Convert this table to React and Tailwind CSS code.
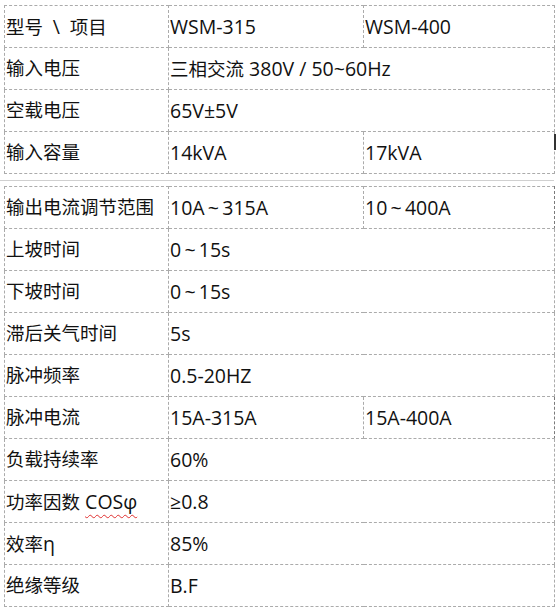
const font = { fontFamily: '"Open Sans", "Noto Sans CJK SC", sans-serif' };

const upper = [
  ["型号\u2002\\\u2002项目", "WSM-315", "WSM-400"],
  ["输入电压", "三相交流 380V / 50~60Hz"],
  ["空载电压", "65V±5V"],
  ["输入容量", "14kVA", "17kVA"],
];

const lower = [
  ["输出电流调节范围", "10A\u2009~\u2009315A", "10\u2009~\u2009400A"],
  ["上坡时间", "0\u2009~\u200915s"],
  ["下坡时间", "0\u2009~\u200915s"],
  ["滞后关气时间", "5s"],
  ["脉冲频率", "0.5-20HZ"],
  ["脉冲电流", "15A-315A", "15A-400A"],
  ["负载持续率", "60%"],
  ["功率因数 COSφ", "≥0.8"],
  ["效率η", "85%"],
  ["绝缘等级", "B.F"],
];

const cell = "border border-dashed border-[#ababab] px-[1px] align-middle whitespace-nowrap";

// latin runs are set a touch larger than the CJK glyphs, like the original
function Mixed({ text }) {
  const parts = text.split(/([\u0020-\u04ff\u2000-\u22ff]+)/).filter(Boolean);
  return parts.map((p, i) =>
    /[\u4e00-\u9fff]/.test(p) ? (
      <span key={i}>{p}</span>
    ) : (
      <span key={i} className="text-[19.5px]">
        {p}
      </span>
    )
  );
}

function Label({ text }) {
  if (text.endsWith("COSφ")) {
    return (
      <>
        功率因数
        <span className="text-[19.5px]"> </span>
        <span className="text-[19.5px] underline decoration-wavy decoration-[#e03030] decoration-1 underline-offset-[5px]">
          COSφ
        </span>
      </>
    );
  }
  return <Mixed text={text} />;
}

function SpecTable({ rows, handleRow, darkRows = [] }) {
  return (
    <table className="table-fixed border-collapse w-[550px] text-[18.5px] text-[#111] leading-none">
      <colgroup>
        <col className="w-[164px]" />
        <col className="w-[195px]" />
        <col className="w-[191px]" />
      </colgroup>
      <tbody>
        {rows.map((r, i) => (
          <tr key={i} className="h-[42px]">
            <td className={cell}>
              <Label text={r[0]} />
            </td>
            {r.length === 3 ? (
              <>
                <td className={cell}>
                  <Mixed text={r[1]} />
                </td>
                <td
                  className={`${cell} relative ${
                    darkRows.includes(i) ? "border-r-[#7a7a7a]" : ""
                  }`}
                >
                  <Mixed text={r[2]} />
                  {i === handleRow && (
                    <span className="absolute right-[-2px] top-[2px] h-[16px] w-[2px] bg-[#333]" />
                  )}
                </td>
              </>
            ) : (
              <td className={cell} colSpan={2}>
                <Mixed text={r[1]} />
              </td>
            )}
          </tr>
        ))}
      </tbody>
    </table>
  );
}

export default function App() {
  return (
    <div className="w-[556px] h-[609px] bg-white overflow-hidden pl-[4px] pt-[5px]" style={font}>
      <SpecTable rows={upper} handleRow={3} />
      <div className="h-[12px] flex items-center -ml-[4px]">
        <div className="w-[554px] h-[1px] bg-[#d0d0d0]" />
      </div>
      <SpecTable rows={lower} handleRow={-1} darkRows={[0, 5]} />
    </div>
  );
}
